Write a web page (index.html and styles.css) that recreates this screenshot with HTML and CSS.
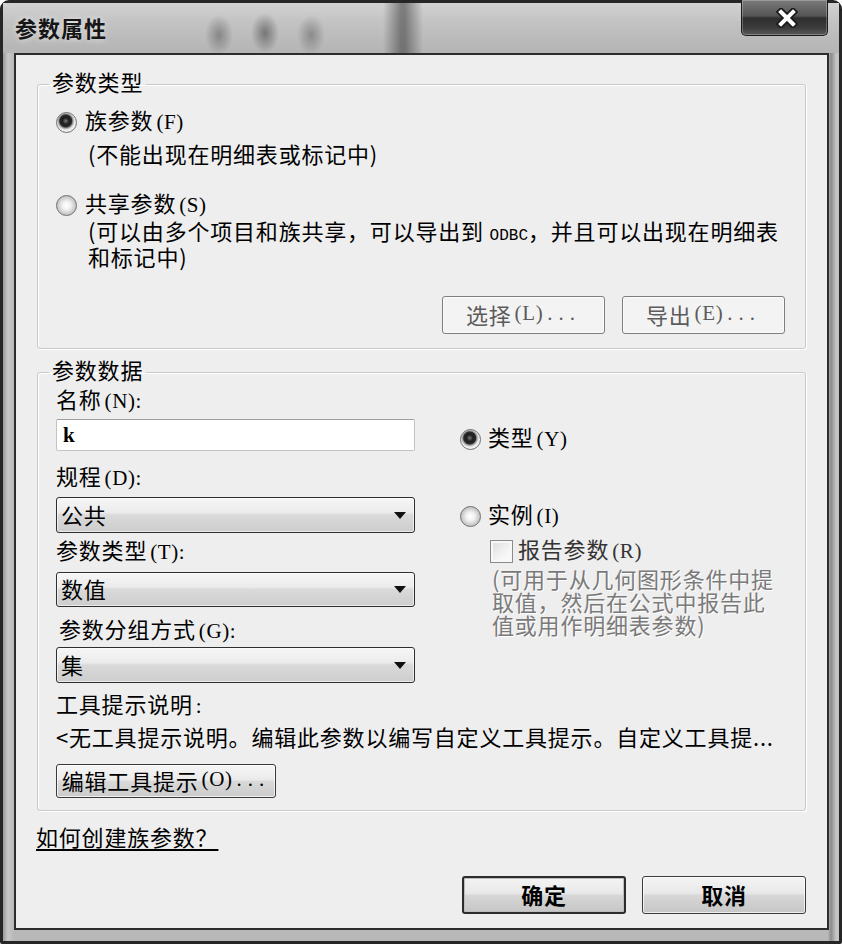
FILE: index.html
```html
<!DOCTYPE html>
<html lang="zh-CN">
<head>
<meta charset="utf-8">
<title>参数属性</title>
<link rel="stylesheet" href="styles.css">
</head>
<body>
<div class="window">
  <div class="titlebar">
    <span class="title">参数属性</span>
    <div class="close">
      <svg width="22" height="20" viewBox="0 0 22 20"><path d="M5 4 L17 16 M17 4 L5 16" stroke="#1a1a1a" stroke-width="7.5" stroke-linecap="square"/><path d="M5 4 L17 16 M17 4 L5 16" stroke="#ffffff" stroke-width="4" stroke-linecap="square"/></svg>
    </div>
  </div>
  <div class="client">
    <fieldset class="group group-type">
      <legend>参数类型</legend>
      <div class="radio-row first"><span class="radio checked"></span><span class="rlabel">族参数<span class="mn">(F)</span></span></div>
      <p class="note note-family">(不能出现在明细表或标记中)</p>
      <div class="radio-row shared"><span class="radio"></span><span class="rlabel">共享参数<span class="mn">(S)</span></span></div>
      <p class="note note-shared">(可以由多个项目和族共享，可以导出到 <span class="odbc">ODBC</span>，并且可以出现在明细表<br>和标记中)</p>
      <div class="btn-row">
        <button class="btn btn-disabled">选择<span class="mn">(L)<span class="dots">...</span></span></button>
        <button class="btn btn-disabled">导出<span class="mn">(E)<span class="dots">...</span></span></button>
      </div>
    </fieldset>

    <fieldset class="group group-data">
      <legend>参数数据</legend>
      <div class="data-grid">
        <div class="col-left">
          <div class="flabel l-name">名称<span class="mn">(N):</span></div>
          <div class="textbox"><span class="tb-text">k</span></div>
          <div class="flabel l-disc">规程<span class="mn">(D):</span></div>
          <div class="combo c-disc"><span>公共</span></div>
          <div class="flabel l-ptype">参数类型<span class="mn">(T):</span></div>
          <div class="combo c-ptype"><span>数值</span></div>
          <div class="flabel l-group">参数分组方式<span class="mn">(G):</span></div>
          <div class="combo c-group"><span>集</span></div>
        </div>
        <div class="col-right">
          <div class="radio-row r-type"><span class="radio checked"></span><span class="rlabel">类型<span class="mn">(Y)</span></span></div>
          <div class="radio-row r-inst"><span class="radio"></span><span class="rlabel">实例<span class="mn">(I)</span></span></div>
          <div class="check-row"><span class="checkbox"></span><span class="clabel">报告参数<span class="mn">(R)</span></span></div>
          <p class="note-disabled">(可用于从几何图形条件中提<br>取值，然后在公式中报告此<br>值或用作明细表参数)</p>
        </div>
      </div>
      <div class="flabel l-tip">工具提示说明<span class="mn">:</span></div>
      <div class="tip-text">&lt;无工具提示说明。编辑此参数以编写自定义工具提示。自定义工具提...</div>
      <button class="btn btn-edit">编辑工具提示<span class="mn">(O)<span class="dots">...</span></span></button>
    </fieldset>

    <a class="help" href="#">如何创建族参数？</a>

    <div class="footer">
      <button class="btn btn-default">确定</button>
      <button class="btn btn-cancel">取消</button>
    </div>
  </div>
</div>
</body>
</html>
```
FILE: styles.css
```css
html, body {
  margin: 0;
  padding: 0;
}
body {
  width: 842px;
  height: 944px;
  overflow: hidden;
  background: #ffffff;
  font-family: "Noto Sans CJK SC", "Noto Sans", sans-serif;
  font-size: 22px;
  letter-spacing: 0.8px;
  color: #000;
}

.window {
  box-sizing: border-box;
  width: 842px;
  height: 944px;
  border: 3px solid #262626;
  border-radius: 9px 9px 2px 2px;
  padding: 0 10px 11px 11px;
  display: flex;
  flex-direction: column;
  background: linear-gradient(to right, #9a9a9a 0, #c8c8c8 5px, #b8b8b8 11px, #b8b8b8 825px, #8a8a8a 828px, #c4c4c4 833px);
}

.titlebar {
  height: 50px;
  margin: 0 -10px 0 -11px;
  padding-left: 12px;
  display: flex;
  align-items: center;
  background:
    radial-gradient(ellipse 14px 20px at 216px 32px, rgba(90,90,90,0.55), rgba(90,90,90,0) 100%),
    radial-gradient(ellipse 14px 20px at 262px 30px, rgba(70,70,70,0.6), rgba(70,70,70,0) 100%),
    radial-gradient(ellipse 14px 20px at 308px 32px, rgba(90,90,90,0.5), rgba(90,90,90,0) 100%),
    linear-gradient(to right, rgba(0,0,0,0) 380px, rgba(60,60,60,0.55) 398px, rgba(60,60,60,0.55) 402px, rgba(0,0,0,0) 420px),
    linear-gradient(to bottom, #d2d2d2 0, #c2c2c2 40%, #b4b4b4 100%);
}

.title {
  font-size: 22px;
  font-weight: 700;
  line-height: 28px;
  letter-spacing: 1px;
  color: #161616;
  margin-top: -2px;
  text-shadow: 0 0 6px rgba(255,255,255,0.7);
}

.close {
  margin-left: auto;
  margin-right: 11px;
  align-self: flex-start;
  margin-top: -3px;
  box-sizing: border-box;
  width: 87px;
  height: 36px;
  border: 1px solid #1c1c1c;
  border-top: none;
  border-radius: 0 0 5px 5px;
  background: linear-gradient(to bottom, #7a7a7a 0, #555 45%, #2e2e2e 52%, #3c3c3c 80%, #5a5a5a 100%);
  box-shadow: inset 0 0 0 1px rgba(255,255,255,0.25);
  display: flex;
  align-items: center;
  justify-content: center;
  padding-left: 5px;
}

.client {
  flex: 1;
  box-sizing: border-box;
  border: 2px solid #2c2c2c;
  background: #eeeeee;
  padding: 16px 21px 0 21px;
  display: flex;
  flex-direction: column;
}

.mn {
  font-family: "Liberation Serif", serif;
  font-size: 21px;
  line-height: 1;
  letter-spacing: 0.6px;
  margin-left: 3px;
}
.dots {
  letter-spacing: 6px;
  margin-left: 4px;
}

/* group boxes */
.group {
  margin: 0;
  border: 1px solid #c9c9c9;
  border-radius: 3px;
  box-shadow: inset 1px 1px 0 #ffffff, 1px 1px 0 #ffffff;
  min-width: 0;
}
.group legend {
  padding: 0 3px 6px;
  margin-left: -7px;
  line-height: 20px;
}
.group-type {
  padding: 0 20px 14px 18px;
}
.group-data {
  margin-top: 10px;
  padding: 0 20px 12px 18px;
}

.radio-row {
  display: flex;
  align-items: center;
  height: 26px;
}
.rlabel, .clabel {
  line-height: 22px;
  padding-bottom: 4px;
}
.radio {
  flex: none;
  box-sizing: border-box;
  width: 21px;
  height: 21px;
  border-radius: 50%;
  border: 1px solid #6f6f6f;
  background: radial-gradient(circle at 50% 50%, #ffffff 0, #f2f2f2 30%, #bdbdbd 75%, #dcdcdc 100%);
  margin-right: 8px;
}
.radio.checked {
  background: radial-gradient(circle at 46% 42%, #7a7a7a 0, #1e1e1e 22%, #2a2a2a 40%, #8d8d8d 46%, #e6e6e6 58%, #f4f4f4 70%, #b8b8b8 100%);
}

.first { margin-top: 12px; }
.note {
  margin: 0;
  padding-left: 32px;
  line-height: 26px;
}
.note-family { margin-top: 5px; }
.shared { margin-top: 26px; }
.note-shared {
  line-height: 24px;
  margin-top: 0;
}
.odbc {
  font-family: "Liberation Mono", monospace;
  font-size: 16px;
  line-height: 1;
  letter-spacing: 0;
}

.btn-row {
  display: flex;
  justify-content: flex-end;
  gap: 17px;
  margin-top: 28px;
}

.btn {
  box-sizing: border-box;
  font-family: inherit;
  font-size: 22px;
  letter-spacing: 0.8px;
  line-height: 26px;
  padding: 0 0 3px;
  margin: 0;
  color: #000;
  border-radius: 3px;
  display: flex;
  align-items: center;
  justify-content: center;
}
.btn-disabled {
  width: 163px;
  height: 38px;
  border: 1px solid #7e7e7e;
  background: #f3f3f3;
  color: #5c5c5c;
  box-shadow: inset 0 0 0 1px #fbfbfb;
}

/* data group */
.data-grid {
  display: grid;
  grid-template-columns: 359px 1fr;
  column-gap: 45px;
  margin-top: 3px;
}
.col-left, .col-right {
  display: flex;
  flex-direction: column;
}
.flabel {
  line-height: 20px;
  height: 20px;
  padding-bottom: 6px;
}
.textbox {
  box-sizing: border-box;
  height: 32px;
  margin-top: 5px;
  background: #ffffff;
  border: 1px solid #c3c3c3;
  border-top-color: #9e9e9e;
  border-radius: 2px;
  display: flex;
  align-items: center;
  padding-left: 6px;
}
.tb-text {
  font-family: "Liberation Serif", serif;
  font-weight: 700;
  font-size: 21px;
}
.l-disc { margin-top: 14px; }
.combo {
  box-sizing: border-box;
  border: 1px solid #2f2f2f;
  border-radius: 3px;
  background: linear-gradient(to bottom, #f6f6f6 0, #ececec 42%, #dadada 50%, #cdcdcd 100%);
  box-shadow: inset 0 0 0 1px rgba(255,255,255,0.6);
  display: flex;
  align-items: center;
  padding: 0 8px 0 4px;
  line-height: 26px;
}
.combo span {
  padding-bottom: 3px;
}
.combo::after {
  content: "";
  margin-left: auto;
  width: 0;
  height: 0;
  border-left: 6px solid transparent;
  border-right: 6px solid transparent;
  border-top: 7px solid #111;
}
.c-disc { margin-top: 6px; height: 36px; }
.l-ptype { margin-top: 6px; }
.c-ptype { margin-top: 7px; height: 35px; }
.l-group { margin-top: 11px; padding-left: 3px; }
.c-group { margin-top: 3px; height: 36px; }

.r-type { margin-top: 38px; }
.r-type .radio, .r-inst .radio { margin-right: 7px; }
.r-inst { margin-top: 51px; }
.check-row {
  display: flex;
  align-items: center;
  height: 26px;
  margin-top: 9px;
  margin-left: 30px;
}
.checkbox {
  flex: none;
  box-sizing: border-box;
  width: 23px;
  height: 23px;
  border: 1px solid #8a8a8a;
  background: linear-gradient(135deg, #dcdcdc 0, #f4f4f4 60%, #fdfdfd 100%);
  box-shadow: inset 0 0 0 2px #f7f7f7;
  margin-right: 5px;
}
.clabel { color: #333; }
.note-disabled {
  margin: 3px 0 0 32px;
  line-height: 23px;
  color: #7a7a7a;
  text-shadow: 1px 1px 0 #ffffff;
}

.l-tip { margin-top: 10px; }
.tip-text {
  margin-top: 7px;
  line-height: 20px;
  padding-bottom: 6px;
  white-space: nowrap;
}
.btn-edit {
  margin-top: 12px;
  width: 220px;
  height: 34px;
  border: 1px solid #3a3a3a;
  background: linear-gradient(to bottom, #f6f6f6 0, #ebebeb 45%, #d9d9d9 52%, #cbcbcb 100%);
  box-shadow: inset 0 0 0 1px rgba(255,255,255,0.7);
}

.help {
  align-self: flex-start;
  margin-top: 12px;
  margin-left: -1px;
  line-height: 26px;
  color: #000;
  text-decoration: underline;
  text-underline-offset: 3px;
}

.footer {
  display: flex;
  justify-content: flex-end;
  gap: 16px;
  margin-top: 27px;
}
.btn-default, .btn-cancel {
  width: 164px;
  height: 38px;
  font-weight: 700;
  background: linear-gradient(to bottom, #f4f4f4 0, #e8e8e8 45%, #d6d6d6 52%, #c6c6c6 100%);
}
.btn-default {
  border: 2px solid #2c2c2c;
  box-shadow: inset 0 0 0 1px #bdbdbd;
}
.btn-cancel {
  border: 1px solid #3c3c3c;
  box-shadow: inset 0 0 0 1px rgba(255,255,255,0.7);
}
```
